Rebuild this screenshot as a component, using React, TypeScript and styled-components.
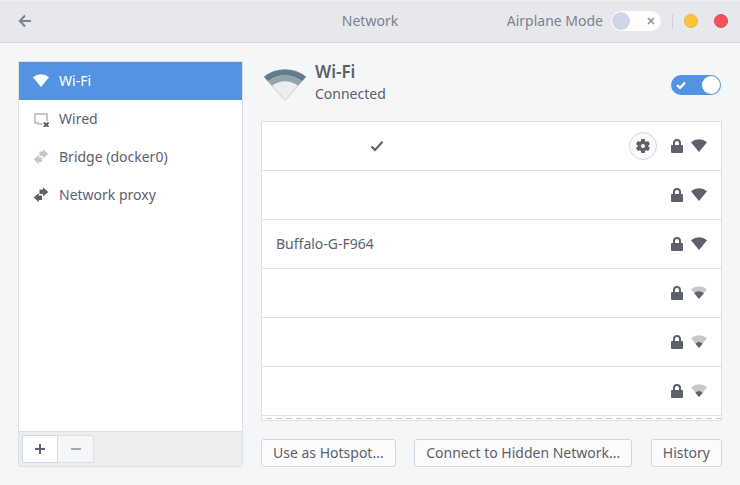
import React, { useState } from "react";
import styled, { createGlobalStyle, css } from "styled-components";

const ink = "#5c616c";
const accent = "#5294e2";
const line = "#dcdfe3";
const buttonLine = "#cfd6e6";

const GlobalStyle = createGlobalStyle`
  *, *::before, *::after { box-sizing: border-box; }
  body {
    margin: 0;
    background: #f5f6f7;
    color: ${ink};
    font: 14px/20px "Noto Sans", "Open Sans", sans-serif;
  }
  button { font: inherit; color: inherit; padding: 0; cursor: pointer; }
  svg { display: block; flex: none; }
`;

const Window = styled.div`
  display: flex;
  flex-direction: column;
  min-height: 100vh;
`;

const TitleBar = styled.header`
  display: grid;
  grid-template-columns: 1fr auto 1fr;
  align-items: center;
  height: 43px;
  padding: 0 12px;
  background: #e7e8eb;
  box-shadow: inset 0 1px #eeeff1;
  border-bottom: 1px solid #d5d7dc;
  color: #7a8294;
`;

const BackButton = styled.button`
  justify-self: start;
  padding: 0 5px;
  border: 0;
  background: none;
`;

const Title = styled.h1`
  margin: 0;
  font-size: 14px;
  font-weight: 400;
`;

const TitleActions = styled.div`
  display: flex;
  align-items: center;
  justify-content: flex-end;
`;

const SwitchLabel = styled.label`
  display: flex;
  align-items: center;
  gap: 8px;
  white-space: nowrap;
`;

const SwitchBox = styled.span`
  position: relative;
  display: block;
  width: 50px;
  height: 20px;
  flex: none;
`;

const SwitchInput = styled.input`
  appearance: none;
  display: flex;
  align-items: center;
  justify-content: flex-start;
  width: 50px;
  height: 20px;
  margin: 0;
  padding: 1px;
  border-radius: 10px;
  background: #fdfdfd;
  cursor: pointer;

  &::before {
    content: "";
    width: 18px;
    height: 18px;
    border-radius: 50%;
    background: #cfd6e6;
  }
  &:checked { background: ${accent}; justify-content: flex-end; }
  &:checked::before { background: #fff; }
`;

const SwitchMark = styled.svg<{ $on: boolean }>`
  position: absolute;
  top: 5px;
  ${(p) => (p.$on ? "left: 5px;" : "right: 5px;")}
  pointer-events: none;
`;

const Separator = styled.span`
  width: 1px;
  height: 15px;
  margin: 0 11px;
  background: #cfd1d6;
`;

const WindowButton = styled.button<{ $fill: string; $edge: string }>`
  width: 14px;
  height: 14px;
  border: 1px solid ${(p) => p.$edge};
  border-radius: 50%;
  background: ${(p) => p.$fill};
  & + & { margin-left: 16px; }
`;

const Content = styled.div`
  display: grid;
  grid-template-columns: 225px 1fr;
  gap: 18px;
  flex: 1;
  padding: 18px;
`;

const Sidebar = styled.nav`
  display: flex;
  flex-direction: column;
  border: 1px solid ${line};
  border-radius: 0 0 3px 3px;
  background: #fff;
`;

const SidebarItem = styled.button<{ $selected: boolean }>`
  display: flex;
  align-items: center;
  gap: 10px;
  height: 38px;
  padding: 0 14px;
  border: 0;
  background: none;
  text-align: left;
  ${(p) => p.$selected && css`
    background: ${accent};
    color: #fff;
  `}
`;

const SidebarFooter = styled.div`
  display: flex;
  margin-top: auto;
  padding: 3px;
  border-top: 1px solid ${line};
  background: #ebedef;
`;

const ToolButton = styled.button`
  display: grid;
  place-items: center;
  width: 36px;
  height: 28px;
  border: 1px solid ${buttonLine};
  border-radius: 3px 0 0 3px;
  background: #fff;

  & + & {
    border-left: 0;
    border-radius: 0 3px 3px 0;
  }
  &:disabled {
    border-color: #dde0e6;
    background: #f5f6f7;
    color: #a5a8ae;
  }
`;

const Main = styled.main`
  display: flex;
  flex-direction: column;
  min-width: 0;
`;

const DeviceHeader = styled.div`
  display: flex;
  align-items: center;
  height: 48px;
  margin-bottom: 12px;
  padding: 0 1px 0 3px;
`;

const DeviceText = styled.div`
  flex: 1;
  align-self: flex-start;
  margin-left: 9px;
  line-height: 22px;
`;

const DeviceName = styled.h2`
  margin: 0;
  font-size: 17px;
  font-weight: 600;
`;

const DeviceStatus = styled.p`
  margin: 0;
`;

const NetworkPanel = styled.div`
  flex: 1;
  margin-bottom: 18px;
  border: 1px solid ${line};
  background: #fff;
`;

const NetworkList = styled.ul`
  margin: 0;
  padding: 0;
  list-style: none;
`;

const NetworkRow = styled.li`
  display: flex;
  align-items: center;
  height: 49px;
  padding: 0 14px;
  border-bottom: 1px solid #dfe1e4;
`;

const NetworkName = styled.span`
  min-width: 93px;
`;

const RowIcons = styled.div`
  display: flex;
  align-items: center;
  gap: 6px;
  margin-left: auto;
`;

const SettingsButton = styled.button`
  display: grid;
  place-items: center;
  width: 28px;
  height: 28px;
  margin-right: 6px;
  border: 1px solid ${buttonLine};
  border-radius: 50%;
  background: #fbfbfc;
`;

const Overflow = styled.div`
  height: 1px;
  margin-top: 2px;
  background: repeating-linear-gradient(90deg, transparent 0 4px, #c4c6c9 4px 10px);
`;

const ActionBar = styled.div`
  display: flex;
  justify-content: space-between;
`;

const ActionButton = styled.button`
  height: 28px;
  padding: 0 11px;
  border: 1px solid ${buttonLine};
  border-radius: 3px;
  background: #fbfbfc;
  white-space: nowrap;
`;

const ArrowLeft = () => (
  <svg width="16" height="16" viewBox="0 0 16 16" fill="none" stroke="currentColor" strokeWidth="2" aria-hidden="true">
    <path d="M14 8H3.5M8 2.5 2.8 8 8 13.5" />
  </svg>
);

const sector = "M0 3.3A12 12 0 0 1 16 3.3L8 13z";

const Signal = ({ level = 1 }: { level?: number }) => (
  <svg width="16" height="16" viewBox="0 0 16 16" fill="currentColor" aria-hidden="true">
    <g transform="translate(0 1)">
      {level < 1 && <path d={sector} opacity="0.35" />}
      <path d={sector} transform={`translate(8 13) scale(${level}) translate(-8 -13)`} />
    </g>
  </svg>
);

const Wired = () => (
  <svg width="16" height="16" viewBox="0 0 16 16" fill="none" stroke="currentColor" aria-hidden="true">
    <path d="M9.5 13H5V12H2V3H14V10" strokeWidth="2" opacity="0.35" />
    <path d="M11 11.5 15.5 16M15.5 11.5 11 16" strokeWidth="2" />
  </svg>
);

const Transfer = ({ faded = false }: { faded?: boolean }) => (
  <svg width="16" height="16" viewBox="0 0 16 16" fill="currentColor" opacity={faded ? 0.35 : 1} aria-hidden="true">
    <path d="M10 0.3 15.2 5 10 9.4V7H6.5V2.6H10z" />
    <path d="M5.7 6 0.8 10.6 5.7 15.2V13H9V8.6H5.7z" />
  </svg>
);

const Lock = () => (
  <svg width="16" height="16" viewBox="0 0 16 16" aria-hidden="true">
    <path d="M5 8V5a3 3 0 0 1 6 0V8" fill="none" stroke="currentColor" strokeWidth="2" />
    <rect x="2" y="7" width="12" height="8" rx="1" fill="currentColor" />
  </svg>
);

const Gear = () => (
  <svg width="16" height="16" viewBox="-8 -8 16 16" fill="currentColor" aria-hidden="true">
    {[0, 60, 120].map((a) => (
      <rect key={a} x="-2" y="-7" width="4" height="14" rx="0.8" transform={`rotate(${a})`} />
    ))}
    <circle r="3.7" fill="none" stroke="currentColor" strokeWidth="3.4" />
    <circle r="2" fill="#fbfbfc" />
  </svg>
);

const Check = () => (
  <svg width="16" height="16" viewBox="0 0 16 16" fill="none" stroke="currentColor" strokeWidth="2.2" aria-hidden="true">
    <path d="M2.5 8.5 6 12 13.5 3.8" />
  </svg>
);

const BigSignal = () => (
  <svg width="42" height="32" viewBox="0 0 42 32" aria-hidden="true">
    <path d="M0 7.8A34 34 0 0 1 42 7.8L21 31.5z" fill="#eceded" stroke="#c3c5c7" strokeWidth="0.8" />
    <path d="M0 7.8A34 34 0 0 1 42 7.8L38 12.3A27.5 27.5 0 0 0 4 12.3z" fill="#607d8b" />
    <path d="M4 12.3A27.5 27.5 0 0 1 38 12.3L34 16.8A21 21 0 0 0 8 16.8z" fill="#90a4ae" />
  </svg>
);

const Plus = () => (
  <svg width="10" height="10" viewBox="0 0 10 10" fill="currentColor" aria-hidden="true">
    <path d="M4 0H6V4H10V6H6V10H4V6H0V4H4z" />
  </svg>
);

const Minus = () => (
  <svg width="10" height="10" viewBox="0 0 10 10" fill="currentColor" aria-hidden="true">
    <path d="M0 4H10V6H0z" />
  </svg>
);

interface SwitchProps {
  checked: boolean;
  onChange: (value: boolean) => void;
  label: string;
}

const Switch = ({ checked, onChange, label }: SwitchProps) => (
  <SwitchBox>
    <SwitchInput
      type="checkbox"
      role="switch"
      aria-label={label}
      checked={checked}
      onChange={(e) => onChange(e.target.checked)}
    />
    <SwitchMark
      $on={checked}
      width="10"
      height="10"
      viewBox="0 0 10 10"
      fill="none"
      stroke={checked ? "#fff" : "#8d919b"}
      strokeWidth={checked ? 2.2 : 1.6}
      aria-hidden="true"
    >
      <path d={checked ? "M1 5 4 8 9 2.5" : "M2 2 8 8M8 2 2 8"} />
    </SwitchMark>
  </SwitchBox>
);

const devices = [
  { name: "Wi-Fi", icon: <Signal /> },
  { name: "Wired", icon: <Wired /> },
  { name: "Bridge (docker0)", icon: <Transfer faded /> },
  { name: "Network proxy", icon: <Transfer /> },
];

const networks = [
  { name: "", level: 1, connected: true },
  { name: "", level: 1 },
  { name: "Buffalo-G-F964", level: 1 },
  { name: "", level: 0.6 },
  { name: "", level: 0.45 },
  { name: "", level: 0.45 },
];

export default function App() {
  const [airplane, setAirplane] = useState(false);
  const [wifi, setWifi] = useState(true);
  const [selected, setSelected] = useState("Wi-Fi");

  return (
    <Window>
      <GlobalStyle />
      <TitleBar>
        <BackButton aria-label="Back"><ArrowLeft /></BackButton>
        <Title>Network</Title>
        <TitleActions>
          <SwitchLabel>
            Airplane Mode
            <Switch checked={airplane} onChange={setAirplane} label="Airplane Mode" />
          </SwitchLabel>
          <Separator />
          <WindowButton aria-label="Minimize" $fill="#fac536" $edge="#e8b532" />
          <WindowButton aria-label="Close" $fill="#f65058" $edge="#e0474f" />
        </TitleActions>
      </TitleBar>
      <Content>
        <Sidebar>
          {devices.map((d) => (
            <SidebarItem key={d.name} $selected={d.name === selected} onClick={() => setSelected(d.name)}>
              {d.icon}
              {d.name}
            </SidebarItem>
          ))}
          <SidebarFooter>
            <ToolButton aria-label="Add"><Plus /></ToolButton>
            <ToolButton aria-label="Remove" disabled><Minus /></ToolButton>
          </SidebarFooter>
        </Sidebar>
        <Main>
          <DeviceHeader>
            <BigSignal />
            <DeviceText>
              <DeviceName>Wi-Fi</DeviceName>
              <DeviceStatus>Connected</DeviceStatus>
            </DeviceText>
            <Switch checked={wifi} onChange={setWifi} label="Wi-Fi" />
          </DeviceHeader>
          <NetworkPanel>
            <NetworkList>
              {networks.map((n, i) => (
                <NetworkRow key={i}>
                  <NetworkName>{n.name}</NetworkName>
                  {n.connected && <Check />}
                  <RowIcons>
                    {n.connected && <SettingsButton aria-label="Options"><Gear /></SettingsButton>}
                    <Lock />
                    <Signal level={n.level} />
                  </RowIcons>
                </NetworkRow>
              ))}
            </NetworkList>
            <Overflow />
          </NetworkPanel>
          <ActionBar>
            <ActionButton>Use as Hotspot...</ActionButton>
            <ActionButton>Connect to Hidden Network...</ActionButton>
            <ActionButton>History</ActionButton>
          </ActionBar>
        </Main>
      </Content>
    </Window>
  );
}
